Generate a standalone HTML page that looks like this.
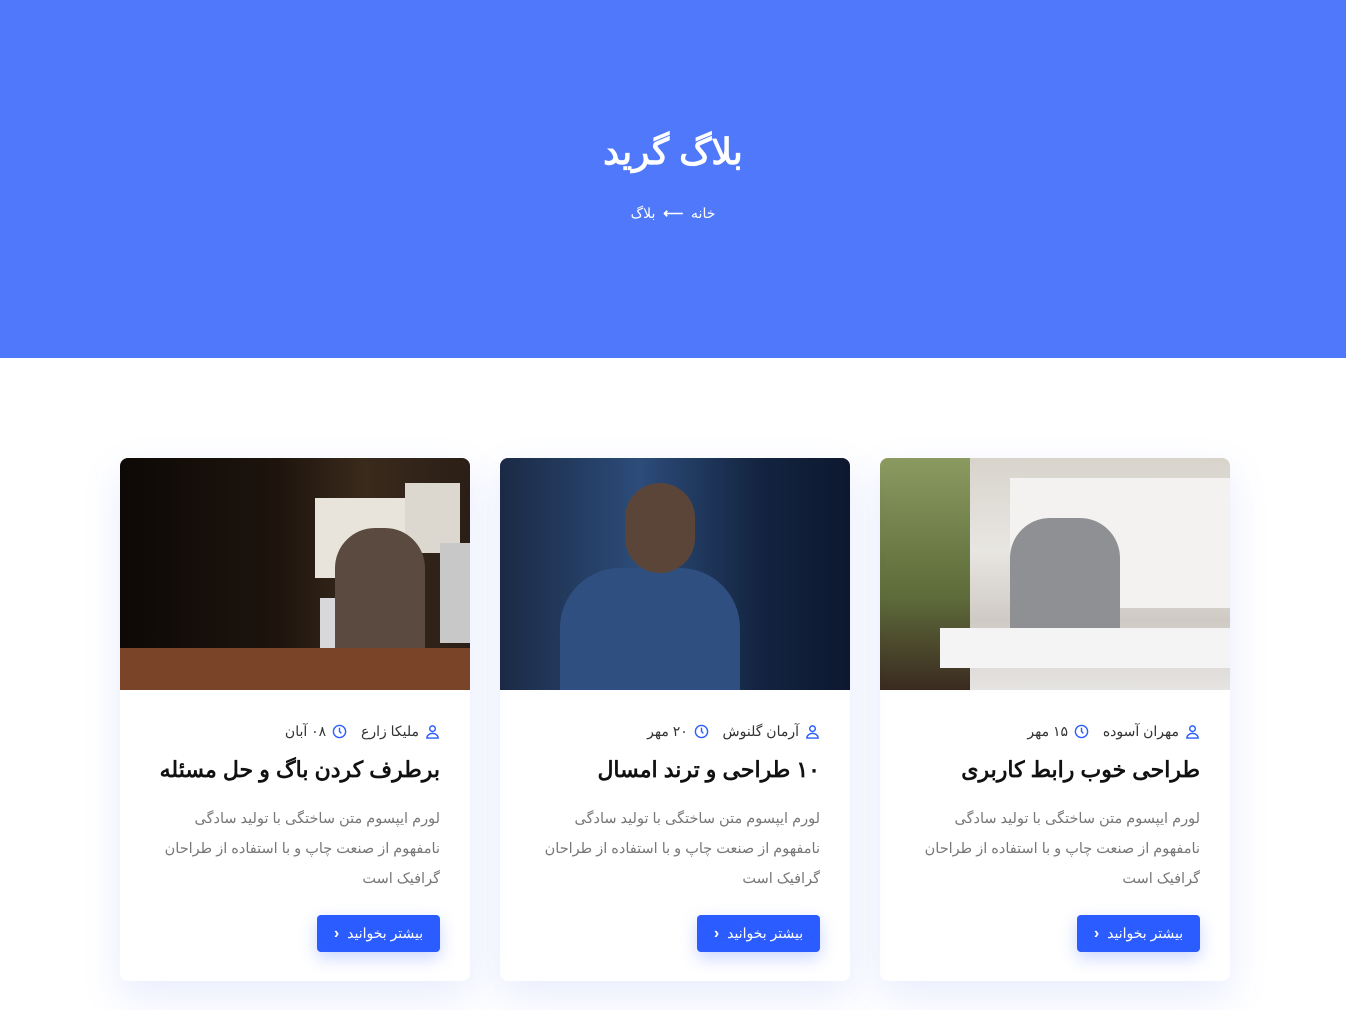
<!DOCTYPE html>
<html dir="rtl"><head><meta charset="utf-8"><style>
*{margin:0;padding:0;box-sizing:border-box}
body{width:1346px;height:1010px;overflow:hidden;background:#fff;font-family:"Liberation Sans","Noto Sans CJK SC",sans-serif;}
.hero{height:358px;background:#4f79fa;color:#fff;text-align:center;position:relative}
.hero h1{position:absolute;top:131px;width:100%;font-size:36px;font-weight:bold}
.bc{position:absolute;top:205px;width:100%;font-size:14px;direction:rtl}
.card{position:absolute;top:458px;width:350px;height:523px;background:#fff;border-radius:8px;box-shadow:0 15px 40px rgba(80,110,250,.13);overflow:hidden}
.img{height:232px;border-radius:6px 6px 0 0;position:relative;overflow:hidden}
.meta{position:absolute;top:265px;right:30px;font-size:14px;color:#333;display:flex;align-items:center;gap:6px;direction:rtl}
.meta svg{width:15px;height:15px}
.card h2{position:absolute;top:299px;right:30px;font-size:22px;font-weight:bold;color:#111;white-space:nowrap}
.card p{position:absolute;top:346px;right:30px;width:290px;font-size:14.5px;line-height:30px;color:#777;text-align:right}
.btn{position:absolute;top:457px;right:30px;width:123px;height:37px;background:#2a5cff;border-radius:4px;color:#fff;font-size:14px;display:flex;align-items:center;justify-content:center;gap:8px;box-shadow:0 6px 16px rgba(42,92,255,.25)}
.btn span{font-weight:bold;font-size:16px}
</style></head><body>
<div class="hero"><h1>بلاگ گرید</h1><div class="bc">خانه &nbsp;<b>⟵</b>&nbsp; بلاگ</div></div>

<div class="card" style="left:880px">
<div class="img" style="background:linear-gradient(180deg,#d8d4cc 0%,#e8e6e2 40%,#cfcac4 70%,#e6e4e2 100%)">
<div style="position:absolute;left:130px;top:20px;width:220px;height:130px;background:#f3f2f0"></div>
<div style="position:absolute;left:0;top:0;width:90px;height:232px;background:linear-gradient(#8a9a60,#5e6b3a 60%,#3a2a20)"></div>
<div style="position:absolute;left:130px;top:60px;width:110px;height:120px;background:#8e9094;border-radius:40px 40px 0 0"></div>
<div style="position:absolute;left:60px;top:170px;width:290px;height:40px;background:#f4f4f4"></div>
</div>
<div class="meta"><svg viewBox="0 0 16 16" fill="none" stroke="#2a5cff" stroke-width="1.5"><circle cx="8" cy="5" r="3"/><path d="M2 15c0-3 3-5 6-5s6 2 6 5z"/></svg>مهران آسوده&nbsp;&nbsp;<svg viewBox="0 0 16 16" fill="none" stroke="#2a5cff" stroke-width="1.5"><circle cx="8" cy="8" r="6.5"/><path d="M8 4v4l2 2"/></svg>۱۵ مهر</div>
<h2>طراحی خوب رابط کاربری</h2>
<p>لورم ایپسوم متن ساختگی با تولید سادگی نامفهوم از صنعت چاپ و با استفاده از طراحان گرافیک است</p>
<div class="btn">بیشتر بخوانید <span>‹</span></div></div>

<div class="card" style="left:500px">
<div class="img" style="background:linear-gradient(90deg,#1b2a45 0%,#2c4c7a 40%,#13233f 75%,#0d1830 100%)">
<div style="position:absolute;left:60px;top:110px;width:180px;height:122px;background:#2f4f80;border-radius:60px 60px 0 0"></div>
<div style="position:absolute;left:125px;top:25px;width:70px;height:90px;background:#5a4538;border-radius:35px"></div>
</div>
<div class="meta"><svg viewBox="0 0 16 16" fill="none" stroke="#2a5cff" stroke-width="1.5"><circle cx="8" cy="5" r="3"/><path d="M2 15c0-3 3-5 6-5s6 2 6 5z"/></svg>آرمان گلنوش&nbsp;&nbsp;<svg viewBox="0 0 16 16" fill="none" stroke="#2a5cff" stroke-width="1.5"><circle cx="8" cy="8" r="6.5"/><path d="M8 4v4l2 2"/></svg>۲۰ مهر</div>
<h2>۱۰ طراحی و ترند امسال</h2>
<p>لورم ایپسوم متن ساختگی با تولید سادگی نامفهوم از صنعت چاپ و با استفاده از طراحان گرافیک است</p>
<div class="btn">بیشتر بخوانید <span>‹</span></div></div>

<div class="card" style="left:120px">
<div class="img" style="background:linear-gradient(90deg,#0d0906 0%,#1e140d 45%,#3a2a1c 70%,#2a1e16 100%)">
<div style="position:absolute;left:195px;top:40px;width:90px;height:80px;background:#e8e4dc"></div>
<div style="position:absolute;left:285px;top:25px;width:55px;height:70px;background:#dcd8d0"></div>
<div style="position:absolute;left:0;top:190px;width:350px;height:42px;background:#7a4428"></div>
<div style="position:absolute;left:200px;top:140px;width:75px;height:50px;background:#d8d8da"></div>
<div style="position:absolute;left:215px;top:70px;width:90px;height:120px;background:#5a4a40;border-radius:40px 40px 0 0"></div>
<div style="position:absolute;left:320px;top:85px;width:30px;height:100px;background:#c8c8c8"></div>
</div>
<div class="meta"><svg viewBox="0 0 16 16" fill="none" stroke="#2a5cff" stroke-width="1.5"><circle cx="8" cy="5" r="3"/><path d="M2 15c0-3 3-5 6-5s6 2 6 5z"/></svg>ملیکا زارع&nbsp;&nbsp;<svg viewBox="0 0 16 16" fill="none" stroke="#2a5cff" stroke-width="1.5"><circle cx="8" cy="8" r="6.5"/><path d="M8 4v4l2 2"/></svg>۰۸ آبان</div>
<h2>برطرف کردن باگ و حل مسئله</h2>
<p>لورم ایپسوم متن ساختگی با تولید سادگی نامفهوم از صنعت چاپ و با استفاده از طراحان گرافیک است</p>
<div class="btn">بیشتر بخوانید <span>‹</span></div></div>
</body></html>
